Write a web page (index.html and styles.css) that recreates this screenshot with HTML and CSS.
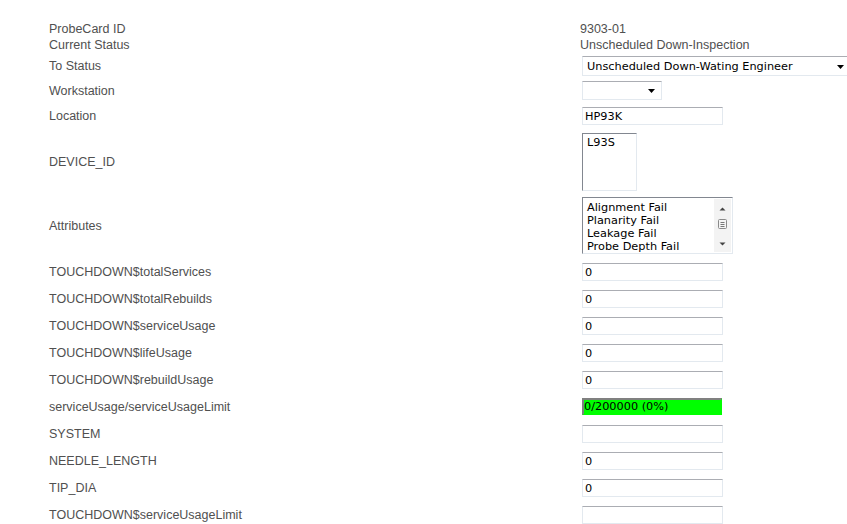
FILE: index.html
```html
<!DOCTYPE html>
<html>
<head>
<meta charset="utf-8">
<link rel="stylesheet" href="styles.css">
</head>
<body>
<div class="form">
  <div class="row r-text1"><div class="label">ProbeCard ID</div><div class="value">9303-01</div></div>
  <div class="row r-text2"><div class="label">Current Status</div><div class="value">Unscheduled Down-Inspection</div></div>
  <div class="row r-status"><div class="label">To Status</div>
    <div class="value"><div class="select select-wide"><span>Unscheduled Down-Wating Engineer</span><svg class="arrow" width="7" height="4" viewBox="0 0 7 4"><path d="M0 0H7L3.5 4Z" fill="#000"/></svg></div></div></div>
  <div class="row r-ws"><div class="label">Workstation</div>
    <div class="value"><div class="select select-small"><span></span><svg class="arrow" width="7" height="4" viewBox="0 0 7 4"><path d="M0 0H7L3.5 4Z" fill="#000"/></svg></div></div></div>
  <div class="row r-loc"><div class="label">Location</div><div class="value"><div class="input">HP93K</div></div></div>
  <div class="row r-dev"><div class="label">DEVICE_ID</div><div class="value"><div class="listbox list-dev"><div class="opt">L93S</div></div></div></div>
  <div class="row r-attr"><div class="label">Attributes</div>
    <div class="value"><div class="listbox list-attr">
      <div class="opts">
        <div class="opt">Alignment Fail</div>
        <div class="opt">Planarity Fail</div>
        <div class="opt">Leakage Fail</div>
        <div class="opt">Probe Depth Fail</div>
      </div>
      <div class="scroll">
        <svg width="17" height="54" viewBox="0 0 17 54">
          <path d="M5.5 11.5H11.5L8.5 8.5Z" fill="#444"/>
          <rect x="4.5" y="20.5" width="8" height="9" rx="1" fill="#f4f4f4" stroke="#8a8a8a"/>
          <path d="M6.5 23.5H10.5M6.5 25.5H10.5M6.5 27.5H10.5" stroke="#777"/>
          <path d="M5.5 43.5H11.5L8.5 46.5Z" fill="#444"/>
        </svg>
      </div>
    </div></div></div>
  <div class="row r-in"><div class="label">TOUCHDOWN$totalServices</div><div class="value"><div class="input">0</div></div></div>
  <div class="row r-in"><div class="label">TOUCHDOWN$totalRebuilds</div><div class="value"><div class="input">0</div></div></div>
  <div class="row r-in"><div class="label">TOUCHDOWN$serviceUsage</div><div class="value"><div class="input">0</div></div></div>
  <div class="row r-in"><div class="label">TOUCHDOWN$lifeUsage</div><div class="value"><div class="input">0</div></div></div>
  <div class="row r-in"><div class="label">TOUCHDOWN$rebuildUsage</div><div class="value"><div class="input">0</div></div></div>
  <div class="row r-in"><div class="label">serviceUsage/serviceUsageLimit</div><div class="value"><div class="usage">0/200000 (0%)</div></div></div>
  <div class="row r-in"><div class="label">SYSTEM</div><div class="value"><div class="input"></div></div></div>
  <div class="row r-in"><div class="label">NEEDLE_LENGTH</div><div class="value"><div class="input">0</div></div></div>
  <div class="row r-in"><div class="label">TIP_DIA</div><div class="value"><div class="input">0</div></div></div>
  <div class="row r-in"><div class="label">TOUCHDOWN$serviceUsageLimit</div><div class="value"><div class="input"></div></div></div>
</div>
</body>
</html>
```

FILE: styles.css
```css
html, body {
  margin: 0;
  padding: 0;
  background: #fff;
  overflow: hidden;
}
.form {
  padding: 21px 0 0 49px;
  font-family: "Liberation Sans", Arial, sans-serif;
  font-size: 12.5px;
  color: #505050;
}
.row {
  display: grid;
  grid-template-columns: 531px 1fr;
  align-items: center;
}
.r-text1, .r-text2 { height: 16px; }
.r-status { height: 26px; }
.r-ws { height: 23px; }
.r-loc { height: 28px; }
.r-dev { height: 63px; }
.r-attr { height: 65px; }
.r-in { height: 27px; }
.value { white-space: nowrap; }

.select, .input, .listbox, .usage {
  margin-left: 2px;
  box-sizing: border-box;
  font-family: "DejaVu Sans", Verdana, sans-serif;
  font-size: 11.3px;
  color: #000;
  background: #fff;
}
.select {
  display: flex;
  align-items: center;
  justify-content: space-between;
  border: 1px solid #e3e9ef;
  border-top-color: #abadb3;
  padding: 1px 3px 0 4px;
}
.select-wide { width: 266px; height: 20px; }
.select-small { width: 80px; height: 19px; padding-right: 6px; }
.input {
  width: 141px;
  height: 18px;
  border: 1px solid #e3e9ef;
  border-top-color: #abadb3;
  padding: 0 2px;
  line-height: 17px;
}
.listbox {
  border: 1px solid #e3e9ef;
  border-top-color: #828790;
  border-left-color: #828790;
}
.list-dev {
  width: 55px;
  height: 58px;
  padding: 2px 4px;
}
.list-attr {
  width: 151px;
  height: 57px;
  display: flex;
  justify-content: space-between;
}
.opts { padding: 3px 0 0 4px; }
.opt { line-height: 13px; }
.scroll {
  width: 17px;
  background: #f3f3f3;
  margin: 1px 1px 1px 0;
  display: flex;
}
.usage {
  width: 140px;
  height: 17px;
  background: #00ff00;
  border: 1px solid #00ff00;
  border-top: 2px solid #808080;
  border-left: 2px solid #808080;
  padding-left: 0;
  line-height: 14px;
}
```
